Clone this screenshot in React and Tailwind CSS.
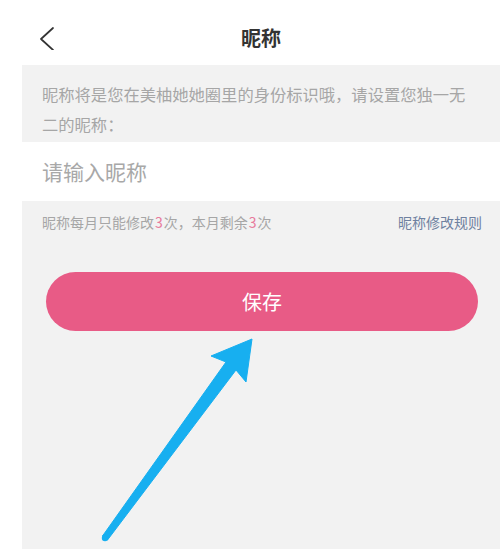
import React from 'react';

const font = { fontFamily: '"Noto Sans CJK SC", "Noto Sans", sans-serif' };

const Arrow = () => (
  <svg className="absolute left-0 top-0 pointer-events-none" width="500" height="549" viewBox="0 0 500 549">
    <polygon
      points="252,339 246,382 236,370 107.5,540 102.5,536 226,362 211,356"
      fill="#17aff0"
      stroke="#17aff0"
      strokeWidth="1"
      strokeLinejoin="round"
    />
    <circle cx="105" cy="538" r="3.2" fill="#17aff0" />
  </svg>
);

export default function App() {
  return (
    <div className="relative flex w-full h-[549px] bg-white overflow-hidden" style={font}>
      <div className="ml-[22px] flex-1 flex flex-col">
        <header className="grid grid-cols-[60px_1fr_60px] items-center h-[65px] pt-[10px] bg-white">
          <div className="pl-[17px]">
            <svg width="16" height="24" viewBox="0 0 16 24">
              <polyline points="14,2 2,13 14,24" fill="none" stroke="#333" strokeWidth="1.7" strokeLinecap="round" strokeLinejoin="round" />
            </svg>
          </div>
          <h1 className="text-center text-[20px] font-bold text-[#333] leading-none">昵称</h1>
          <div />
        </header>

        <div className="bg-[#f2f2f2] h-[77px] pl-5 pr-[30px] pt-[14px]">
          <p className="text-[16.3px] leading-[30px] text-[#a6a6a6]">
            昵称将是您在美柚她她圈里的身份标识哦，请设置您独一无二的昵称：
          </p>
        </div>

        <div className="h-[59px] flex items-center pl-5 bg-white">
          <input
            className="w-full outline-none bg-transparent text-[21px] text-[#333] placeholder:text-[#a8a8a8]"
            style={font}
            placeholder="请输入昵称"
          />
        </div>

        <div className="flex-1 bg-[#f2f2f2] flex flex-col">
          <div className="h-[42px] flex items-center justify-between pl-5 pr-[18px] text-[14px]">
            <span className="text-[#a6a6a6]">
              昵称每月只能修改<span className="text-[#e87a9c] px-[1px]">3</span>次，本月剩余<span className="text-[#e87a9c] px-[1px]">3</span>次
            </span>
            <span className="text-[#6f81a0]">昵称修改规则</span>
          </div>
          <button className="mt-[29px] ml-6 mr-[22px] h-[59px] rounded-full bg-[#e85b86] text-white text-[20px] flex items-center justify-center">
            保存
          </button>
        </div>
      </div>
      <Arrow />
    </div>
  );
}
